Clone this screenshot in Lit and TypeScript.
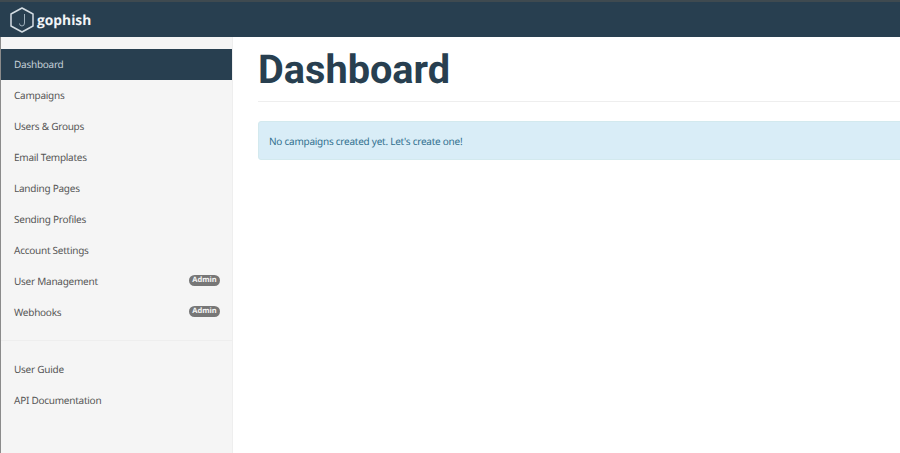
import { LitElement, html, css } from "lit";
import { customElement } from "lit/decorators.js";

const primary = [
  { label: "Dashboard", active: true },
  { label: "Campaigns" },
  { label: "Users & Groups" },
  { label: "Email Templates" },
  { label: "Landing Pages" },
  { label: "Sending Profiles" },
  { label: "Account Settings" },
  { label: "User Management", admin: true },
  { label: "Webhooks", admin: true },
];
const secondary = [{ label: "User Guide" }, { label: "API Documentation" }];

@customElement("app-root")
export class AppRoot extends LitElement {
  static styles = css`
    :host {
      display: block;
      width: 900px;
      height: 453px;
      overflow: hidden;
      background: #fff;
      font-family: "Noto Sans", "Open Sans", sans-serif;
      font-size: 10px;
      letter-spacing: -0.25px;
      text-rendering: geometricPrecision;
      color: #555;
    }
    .topstrip { height: 2px; background: #3f4a50; }
    .navbar {
      height: 35px;
      background: #283f50;
      display: flex;
      align-items: center;
      gap: 3px;
      padding-left: 10px;
      box-sizing: border-box;
    }
    .logo { display: block; }
    .brand {
      color: #f2f5f7;
      font-family: "Open Sans", sans-serif;
      font-weight: 700;
      font-size: 13.8px;
      letter-spacing: 0;
      line-height: 1;
      margin-top: 3px;
    }
    .body { display: flex; height: 416px; }
    .sidebar {
      width: 233px;
      flex: none;
      box-sizing: border-box;
      background: #f5f5f5;
      border-left: 1px solid #8b8b8b;
      border-right: 1px solid #eeeeee;
      padding-top: 12px;
    }
    .nav { display: flex; flex-direction: column; }
    .item {
      height: 30.9px;
      display: flex;
      align-items: center;
      justify-content: space-between;
      padding: 0 12px 0 13px;
      box-sizing: border-box;
      color: #555;
    }
    .item.active { background: #283f50; color: #c4d0d8; }
    .badge {
      background: #777;
      color: #f5f5f5;
      font-size: 7.5px;
      font-weight: 700;
      letter-spacing: 0;
      line-height: 11px;
      width: 31px;
      text-align: center;
      border-radius: 6px;
    }
    .divider { height: 1px; background: #eee; margin: 13px 0 13px; }
    .main { flex: none; width: 700px; padding-left: 25px; box-sizing: border-box; }
    h1 {
      margin: 0;
      height: 65px;
      box-sizing: border-box;
      padding-top: 8px;
      font-family: Roboto, sans-serif;
      font-weight: 700;
      font-size: 39.7px;
      letter-spacing: 0;
      line-height: 50px;
      color: #283f50;
      border-bottom: 1px solid #eeeeee;
    }
    .alert {
      margin-top: 19px;
      height: 39px;
      box-sizing: border-box;
      display: flex;
      align-items: center;
      padding-left: 10px;
      background: #d9edf7;
      border: 1px solid #d3e9ee;
      border-radius: 3px;
      color: #31708f;
    }
  `;

  private row(i: { label: string; active?: boolean; admin?: boolean }) {
    return html`<div class="item ${i.active ? "active" : ""}">
      <span>${i.label}</span>${i.admin ? html`<span class="badge">Admin</span>` : ""}
    </div>`;
  }

  render() {
    return html`
      <div class="topstrip"></div>
      <header class="navbar">
        <svg class="logo" width="24" height="26" viewBox="0 0 24 26" fill="none" stroke="#d3dce2">
          <path d="M12 1 L23 7 V19 L12 25 L1 19 V7 Z" stroke-width="1.5" stroke-linejoin="round" />
          <path d="M14.5 7 V16 Q14.5 19 12 19 Q9.5 19 9.5 16.5" stroke="#9fb0bb" stroke-width="1" />
        </svg>
        <span class="brand">gophish</span>
      </header>
      <div class="body">
        <aside class="sidebar">
          <nav class="nav">${primary.map((i) => this.row(i))}</nav>
          <div class="divider"></div>
          <nav class="nav">${secondary.map((i) => this.row(i))}</nav>
        </aside>
        <main class="main">
          <h1>Dashboard</h1>
          <div class="alert">No campaigns created yet. Let's create one!</div>
        </main>
      </div>
    `;
  }
}
